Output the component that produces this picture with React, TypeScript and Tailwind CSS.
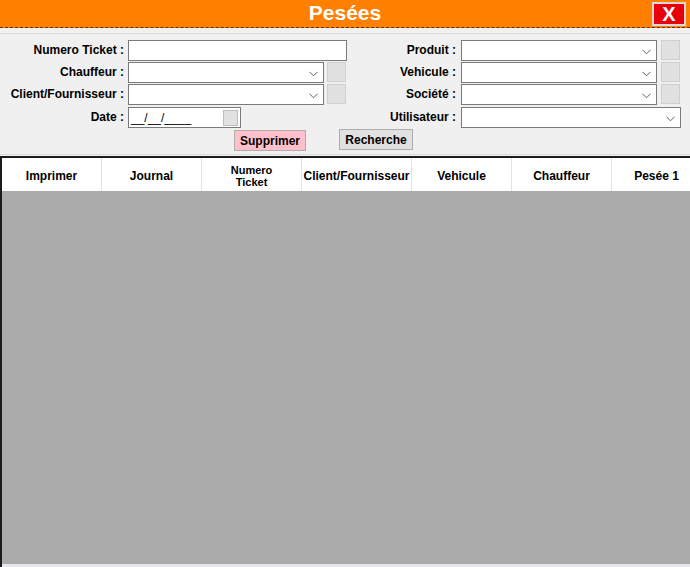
import React from "react";

const font = { fontFamily: '"Liberation Sans", Arial, sans-serif' };

function Chevron() {
  return (
    <svg width="9" height="6" viewBox="0 0 9 6" className="absolute right-[5px] top-[8px]">
      <path d="M0.5 0.8 L4.5 4.8 L8.5 0.8" fill="none" stroke="#606060" strokeWidth="1" />
    </svg>
  );
}

function Select({ w }: { w: string }) {
  return (
    <div className={`relative h-[21px] bg-white border border-[#7a7a7a] ${w}`}>
      <Chevron />
    </div>
  );
}

function Sq() {
  return <div className="w-[19px] h-[20px] bg-[#e1e1e1] border border-[#cfcfcf]" />;
}

function Label({ children, w }: { children: React.ReactNode; w: string }) {
  return (
    <div className={`${w} text-right text-[12px] font-bold text-black leading-[21px] whitespace-nowrap`}>{children}</div>
  );
}

export default function App() {
  const cols: { label: React.ReactNode; w: string }[] = [
    { label: "Imprimer", w: "w-[100px]" },
    { label: "Journal", w: "w-[100px]" },
    { label: <span className="text-[11px] leading-[12px] block">Numero<br />Ticket</span>, w: "w-[100px]" },
    { label: "Client/Fournisseur", w: "w-[110px]" },
    { label: "Vehicule", w: "w-[100px]" },
    { label: "Chauffeur", w: "w-[100px]" },
    { label: "Pesée 1", w: "w-[90px]" },
  ];
  return (
    <div style={font} className="w-[690px] h-[567px] bg-[#f0f0f0] flex flex-col overflow-hidden">
      {/* title bar */}
      <div className="h-[28px] bg-[#ff8000] border-b border-dashed border-[#5a3000] flex items-center shrink-0">
        <div className="w-[38px]" />
        <div className="flex-1 text-center text-white font-bold text-[21px] leading-[26px] pb-[1px]">Pesées</div>
        <div className="w-[34px] h-[24px] mr-[4px] mt-[1px] bg-[#e8000b] border-2 border-[#d8d8d8] flex items-center justify-center text-white font-bold text-[20px] leading-none">
          X
        </div>
      </div>
      {/* form panel */}
      <div className="mt-[5px] border-t border-[#dcdcdc] h-[121px] shrink-0 flex flex-col pt-[6px]">
        <div className="flex flex-col gap-[1px]">
          <div className="flex items-center h-[21px]">
            <Label w="w-[124px]">Numero Ticket :</Label>
            <div className="ml-[4px] w-[219px] flex">
              <div className="w-[219px] h-[21px] bg-white border border-[#7a7a7a]" />
            </div>
            <Label w="w-[109px]">Produit :</Label>
            <div className="ml-[5px] flex gap-[4px]">
              <Select w="w-[196px]" />
              <Sq />
            </div>
          </div>
          <div className="flex items-center h-[21px]">
            <Label w="w-[124px]">Chauffeur :</Label>
            <div className="ml-[4px] w-[219px] flex gap-[3px]">
              <Select w="w-[196px]" />
              <Sq />
            </div>
            <Label w="w-[109px]">Vehicule :</Label>
            <div className="ml-[5px] flex gap-[4px]">
              <Select w="w-[196px]" />
              <Sq />
            </div>
          </div>
          <div className="flex items-center h-[21px]">
            <Label w="w-[124px]">Client/Fournisseur :</Label>
            <div className="ml-[4px] w-[219px] flex gap-[3px]">
              <Select w="w-[196px]" />
              <Sq />
            </div>
            <Label w="w-[109px]">Société :</Label>
            <div className="ml-[5px] flex gap-[4px]">
              <Select w="w-[196px]" />
              <Sq />
            </div>
          </div>
          <div className="flex items-center h-[21px] mt-[1px]">
            <Label w="w-[124px]">Date :</Label>
            <div className="ml-[4px] w-[219px] flex">
              <div className="w-[113px] h-[21px] bg-white border border-[#7a7a7a] flex items-center justify-between pl-[2px] pr-[2px]">
                <span className="text-[12px] text-black leading-none">__/__/____</span>
                <div className="w-[15px] h-[16px] bg-[#e1e1e1] border border-[#bdbdbd]" />
              </div>
            </div>
            <Label w="w-[109px]">Utilisateur :</Label>
            <div className="ml-[5px] flex">
              <Select w="w-[220px]" />
            </div>
          </div>
        </div>
        <div className="flex items-start mt-[1px] ml-[234px] gap-[33px]">
          <div className="w-[72px] h-[21px] mt-[1px] bg-[#ffc0cb] border border-[#adadad] flex items-center justify-center text-[12px] font-bold text-black">
            Supprimer
          </div>
          <div className="w-[74px] h-[21px] bg-[#e1e1e1] border border-[#adadad] flex items-center justify-center text-[12px] font-bold text-black">
            Recherche
          </div>
        </div>
      </div>
      <div className="h-[1px] bg-[#dcdcdc] shrink-0" />
      {/* grid */}
      <div className="mt-[1px] flex-1 flex flex-col border-t-2 border-l-2 border-[#1c1c1c] overflow-hidden">
        <div className="h-[33px] bg-white flex shrink-0">
          {cols.map((c, i) => (
            <div
              key={i}
              className={`${c.w} shrink-0 h-full flex items-center justify-center text-center text-[12px] font-bold text-black border-r border-[#e2e2e2] whitespace-nowrap pt-[2px]`}
            >
              {c.label}
            </div>
          ))}
        </div>
        <div className="flex-1 bg-[#ababab]" />
        <div className="h-[3px] bg-[#e6e6ee] shrink-0" />
      </div>
    </div>
  );
}
